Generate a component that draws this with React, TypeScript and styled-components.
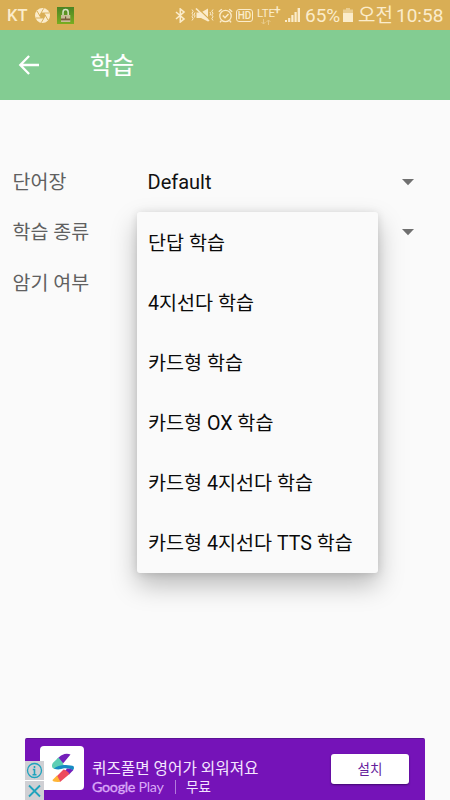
import React from "react";
import styled, { createGlobalStyle } from "styled-components";

const GlobalStyle = createGlobalStyle`
  * { box-sizing: border-box; }
  body {
    margin: 0;
    background: #fafafa;
    font-family: Roboto, "Noto Sans CJK KR", sans-serif;
  }
`;

const Screen = styled.div`
  width: 450px;
  height: 800px;
  overflow: hidden;
  display: flex;
  flex-direction: column;
  background: #fafafa;
`;

const StatusBar = styled.header`
  height: 30px;
  flex: none;
  display: flex;
  align-items: center;
  justify-content: space-between;
  padding: 0 7px;
  background: #d9ae55;
  color: #fbeccb;
  white-space: nowrap;
`;

const StatusGroup = styled.div`
  display: flex;
  align-items: center;
  svg { display: block; flex: none; }
`;

const Carrier = styled.span`
  width: 28px;
  font-size: 16.5px;
  font-weight: 500;
  line-height: 31px;
`;

const StatusText = styled.span<{ $width: number }>`
  width: ${(p) => p.$width}px;
  font-size: 19px;
  line-height: 32px;
  height: 30px;
`;

const Toolbar = styled.div`
  height: 70px;
  flex: none;
  display: flex;
  align-items: center;
  padding-left: 18px;
  background: #83cc92;
  color: #fff;
`;

const Title = styled.h1`
  margin: 0 0 0 51px;
  font-size: 24px;
  font-weight: 400;
  line-height: 72px;
  height: 70px;
  -webkit-text-stroke: 0.2px currentColor;
`;

const Form = styled.main`
  flex: 1;
  padding: 57px 35.5px 0 12.5px;
`;

const FormRow = styled.div`
  height: 50px;
  display: grid;
  grid-template-columns: 135px 1fr 14px;
  align-items: center;
  position: relative;
  &:last-child { height: 52px; }
`;

const Label = styled.span`
  padding-top: 1px;
  font-size: 19.5px;
  line-height: 28px;
  color: #606060;
  white-space: nowrap;
`;

const Value = styled.span`
  font-size: 20px;
  line-height: 28px;
  color: #111;
`;

const Menu = styled.ul`
  position: absolute;
  left: 124.5px;
  top: 5px;
  z-index: 1;
  width: 241px;
  height: 361px;
  margin: 0;
  padding: 1px 0 0;
  list-style: none;
  border-radius: 3px;
  background: #fafafa;
  box-shadow: 0 12px 26px rgba(0, 0, 0, 0.26), 0 1px 8px rgba(0, 0, 0, 0.12);
`;

const MenuItem = styled.li`
  height: 60px;
  padding-left: 11px;
  font-size: 19.6px;
  line-height: 62px;
  color: #0a0a0a;
  white-space: nowrap;
`;

const Ad = styled.aside`
  position: relative;
  width: 400px;
  height: 62px;
  flex: none;
  align-self: center;
  display: flex;
  padding: 7px 16px 0 15px;
  border-radius: 2px 2px 0 0;
  border-top: 1px solid #5b1295;
  background: #7513b8;
  color: #f4e6ff;
`;

const AppIcon = styled.div`
  width: 44px;
  height: 44px;
  border-radius: 4px;
  background: #fff;
  svg { display: block; }
`;

const AdCopy = styled.div`
  flex: 1;
  padding: 13px 0 0 8px;
  white-space: nowrap;
`;

const AdTitle = styled.div`
  font-size: 15.7px;
  line-height: 19px;
`;

const AdMeta = styled.div`
  display: flex;
  align-items: center;
  font-size: 13.5px;
  line-height: 18px;
`;

const Store = styled.span`
  width: 83px;
  font-family: "Lato", sans-serif;
  font-size: 14.3px;
  letter-spacing: -0.3px;
  color: #d9a8f7;
`;

const Brand = styled.span`
  -webkit-text-stroke: 0.35px currentColor;
`;

const Divider = styled.i`
  width: 1px;
  height: 14px;
  margin-right: 10px;
  background: #b47bdd;
`;

const Install = styled.button`
  width: 78px;
  height: 30px;
  margin-top: 8px;
  padding: 0;
  border: 0;
  border-radius: 3px;
  background: #fff;
  box-shadow: 0 1px 2px rgba(30, 0, 60, 0.6);
  color: #65209c;
  font: 13.5px/26px Roboto, "Noto Sans CJK KR", sans-serif;
`;

const AdControls = styled.div`
  position: absolute;
  left: 0;
  top: 22px;
  display: grid;
  gap: 1px;
  background: #fff;
`;

const AdControl = styled.div`
  width: 19px;
  height: 19px;
  background: #d0d0d4;
  svg { display: block; }
`;

const Caret = () => (
  <svg width="14" height="8" viewBox="0 0 14 8">
    <path d="M1 1h12L7 7.2z" fill="#707070" />
  </svg>
);

const Shutter = () => (
  <svg width="15" height="15" viewBox="0 0 24 24">
    <circle cx="12" cy="12" r="12" fill="currentColor" />
    <path
      d="M9.7 8H23M14.3 8 21 19.6M16.6 12 10 23.5M14.3 16H1M9.7 16 3 4.4M7.4 12 14 .5"
      fill="none"
      stroke="#d9ae55"
      strokeWidth="1.5"
    />
    <path d="M9.7 8h4.6l2.3 4-2.3 4H9.7l-2.3-4z" fill="#d9ae55" />
  </svg>
);

const LockBadge = () => (
  <svg width="17" height="17" viewBox="0 0 17 17">
    <defs>
      <linearGradient id="lockGreen" x1="0" y1="0" x2="0" y2="1">
        <stop offset="0" stopColor="#4c8424" />
        <stop offset="1" stopColor="#79ad20" />
      </linearGradient>
    </defs>
    <path d="M0 0h17v17H0z" fill="url(#lockGreen)" />
    <path d="M6 8.5V5.2a2.6 2.6 0 0 1 5.2 0v3.3" fill="none" stroke="#d9e2c4" strokeWidth="1.5" />
    <path d="M4 8h9.3v7H4z" fill="#c9bd96" />
    <path d="M4 11.5h9.3v1.8H4z" fill="#7b5d38" />
    <path d="M8 9.5h1.2v2.5H8z" fill="#6f5939" />
  </svg>
);

const Bluetooth = () => (
  <svg width="11" height="15" viewBox="0 0 11 15">
    <path d="M1 4l8 7-3.7 3V1L9 4l-8 7" fill="none" stroke="currentColor" strokeWidth="1.6" />
  </svg>
);

const VibrateMute = () => (
  <svg width="23" height="16" viewBox="0 0 23 16">
    <path d="M5.5 5.5H10L17 1.5v13L10 11H5.500z" fill="currentColor" />
    <path d="M6.5 1 19 13" stroke="#d9ae55" strokeWidth="1.2" />
    <path d="M5 1.5 18 14" stroke="currentColor" strokeWidth="1.7" />
    <path
      d="M1 2.500l1.200 1.800L1 6.200l1.200 1.800L1 9.800l1.200 1.900L1 13.500M4 5.500l-.8 1.700 .8 1.700-.8 1.700M22 2.500l-1.200 1.800L22 6.200 20.800 8 22 9.800l-1.200 1.900L22 13.500M19 5l.7 1.700-.7 1.700"
      fill="none"
      stroke="currentColor"
      strokeWidth="1"
    />
  </svg>
);

const Alarm = () => (
  <svg width="15" height="15" viewBox="0 0 15 15" fill="none" stroke="currentColor">
    <circle cx="7.5" cy="8" r="5.7" strokeWidth="1.3" />
    <path d="M.8 3.800l3-2.600M14.200 3.800l-3-2.600M3.300 12.700l-1.300 1.700M11.700 12.700l1.300 1.700M4.800 7.500l2.200 2.200L10.500 6" strokeWidth="1.4" />
  </svg>
);

const HdFrame = styled.span`
  width: 17px;
  height: 13px;
  border: 1px solid currentColor;
  border-radius: 3px;
  font-size: 10px;
  font-weight: 500;
  line-height: 11.5px;
  text-align: center;
`;

const Network = styled.span`
  width: 27px;
  height: 24px;
  display: grid;
  grid-template-rows: 16px 6px;
  font-size: 11.5px;
  font-weight: 400;
  line-height: 20px;
  sup {
    margin-left: -1px;
    font-size: 12px;
    font-weight: 500;
    line-height: 0;
    vertical-align: 3px;
  }
  svg { margin-left: 3px; }
`;

const Gap = styled.span<{ $w: number }>`
  width: ${(p) => p.$w}px;
  flex: none;
`;

const Signal = () => (
  <svg width="15" height="14" viewBox="0 0 15 14" fill="currentColor">
    <path d="M0 12h2v2H0zM3.1 10h2.2v4H3.1zM6.3 7h2.2v7H6.3zM9.5 4h2.2v10H9.5zM12.6 0H15v14h-2.4z" />
  </svg>
);

const Battery = () => (
  <svg width="10" height="14" viewBox="0 0 10 14" fill="currentColor">
    <path d="M3 0h4v1.6h3V5H0V1.6h3z" opacity=".5" />
    <path d="M0 5h10v9H0z" />
  </svg>
);

const BackArrow = () => (
  <svg width="21" height="20" viewBox="0 0 21 20" fill="none" stroke="#fff" strokeWidth="2.3">
    <path d="M21 10H2.500M11.100 1 2.300 10l8.800 9" />
  </svg>
);

const AppLogo = () => (
  <svg width="44" height="44" viewBox="0 0 44 44">
    <path d="M17.5 12.5Q21 8.500 24.500 8q3.500-.7 6 .6L23 17.500l-4-1z" fill="#7520ba" />
    <path d="M18.500 11.500 12.800 17q-2 4 .7 5.500 2 1 5 .2l7-2.700-3-2 .7-.8z" fill="#5dceb4" />
    <path d="M14 22.800q3-3.300 10-3.800 7-.3 9.800 1.500.8 1.500-.8 4-3.500-2.500-9-2.200-5 2-10 .5z" fill="#178bc3" />
    <path d="M27 22.400q4 .1 6.200 1.900l-4.200 4.200-4-3.500z" fill="#7520ba" />
    <path d="M23.500 23.500q3.500.5 6 4.500L20 36l-3.500-5.500z" fill="#ed4b5e" />
    <path d="M17 29.500 12.500 34q-.3 2.300 7.800 1.800z" fill="#ffb536" />
  </svg>
);

const menuItems = [
  "단답 학습",
  "4지선다 학습",
  "카드형 학습",
  "카드형 OX 학습",
  "카드형 4지선다 학습",
  "카드형 4지선다 TTS 학습",
];

export default function App() {
  return (
    <Screen>
      <GlobalStyle />
      <StatusBar>
        <StatusGroup>
          <Carrier>KT</Carrier>
          <Shutter />
          <Gap $w={7} />
          <LockBadge />
        </StatusGroup>
        <StatusGroup>
          <Bluetooth />
          <Gap $w={5} />
          <VibrateMute />
          <Gap $w={4} />
          <Alarm />
          <Gap $w={3} />
          <HdFrame>HD</HdFrame>
          <Gap $w={4} />
          <Network>
            <span>LTE<sup>+</sup></span>
            <svg width="12" height="6" viewBox="0 0 12 6" fill="none" stroke="currentColor" opacity=".45">
              <path d="M3.5 0v5M1.5 3l2 2 2-2M8.5 6V1M6.5 3l2-2 2 2" />
            </svg>
          </Network>
          <Gap $w={1} />
          <Signal />
          <Gap $w={5} />
          <StatusText $width={38}>65%</StatusText>
          <Battery />
          <Gap $w={5} />
          <StatusText $width={38}>오전</StatusText>
          <StatusText $width={47}>10:58</StatusText>
        </StatusGroup>
      </StatusBar>
      <Toolbar>
        <BackArrow />
        <Title>학습</Title>
      </Toolbar>
      <Form>
        <FormRow>
          <Label>단어장</Label>
          <Value>Default</Value>
          <Caret />
        </FormRow>
        <FormRow>
          <Label>학습 종류</Label>
          <span />
          <Caret />
          <Menu>
            {menuItems.map((item) => (
              <MenuItem key={item}>{item}</MenuItem>
            ))}
          </Menu>
        </FormRow>
        <FormRow>
          <Label>암기 여부</Label>
        </FormRow>
      </Form>
      <Ad>
        <AppIcon>
          <AppLogo />
        </AppIcon>
        <AdCopy>
          <AdTitle>퀴즈풀면 영어가 외워져요</AdTitle>
          <AdMeta>
            <Store><Brand>Google</Brand> Play</Store>
            <Divider />
            무료
          </AdMeta>
        </AdCopy>
        <Install>설치</Install>
        <AdControls>
          <AdControl>
            <svg width="19" height="19" viewBox="0 0 19 19" fill="none" stroke="#1fa3bd">
              <circle cx="9.5" cy="9.5" r="7" strokeWidth="1.3" />
              <path d="M9.5 5v2M7.8 8.5h1.7V14M7.5 13.8h4" strokeWidth="1.6" />
            </svg>
          </AdControl>
          <AdControl>
            <svg width="19" height="19" viewBox="0 0 19 19" fill="none" stroke="#1fa3bd">
              <path d="m4 4.5 11 11M15 4.5l-11 11" strokeWidth="1.8" />
            </svg>
          </AdControl>
        </AdControls>
      </Ad>
    </Screen>
  );
}
